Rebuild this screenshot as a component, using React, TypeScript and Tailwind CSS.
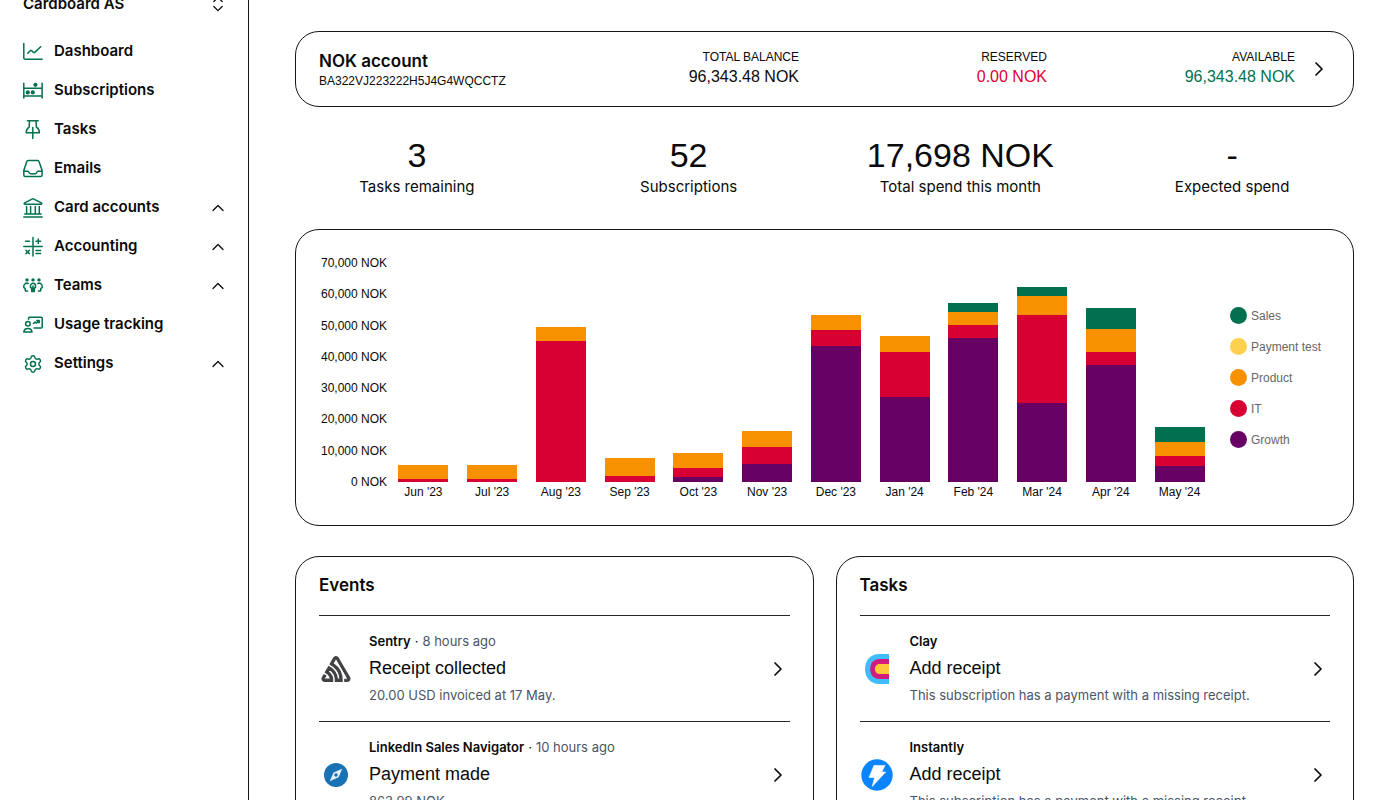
import type { ReactNode } from "react";
import clsx from "clsx";
import { ChevronRight, ChevronsUpDown, ChevronUp, Settings } from "lucide-react";
import { SiSentry } from "react-icons/si";

type Team = "Sales" | "Payment test" | "Product" | "IT" | "Growth";

interface NavItem {
  label: string;
  icon: ReactNode;
  expandable?: boolean;
}

interface MonthSpend {
  month: string;
  spend: Partial<Record<Team, number>>;
}

interface FeedItem {
  name: string;
  time?: string;
  title: string;
  description: string;
  logo: ReactNode;
}

function NavIcon({ children }: { children: ReactNode }) {
  return (
    <svg
      viewBox="0 0 20 20"
      className="size-5 shrink-0 overflow-visible"
      fill="none"
      stroke="currentColor"
      strokeWidth="1.5"
      strokeLinecap="round"
      strokeLinejoin="round"
      aria-hidden="true"
    >
      {children}
    </svg>
  );
}

const navItems: NavItem[] = [
  {
    label: "Dashboard",
    icon: (
      <NavIcon>
        <path d="M.8 1.5v14.2a1.600 1.600 0 0 0 1.600 1.600h16.800" />
        <path d="m4.800 11.300 2.700-2.900a.7.7 0 0 1 1 0l2 2.200a.7.7 0 0 0 1 0l6.200-5.900" />
      </NavIcon>
    ),
  },
  {
    label: "Subscriptions",
    icon: (
      <NavIcon>
        <path d="M.8 2.300v14.600M19.100 2.300v14.600M.8 7.300h18.300M.8 15.100h18.300" />
        <g fill="currentColor" stroke="none">
          <circle cx="12.400" cy="3.800" r="2.100" />
          <circle cx="4.800" cy="11.400" r="2.100" />
          <circle cx="9.800" cy="11.400" r="2.100" />
        </g>
      </NavIcon>
    ),
  },
  {
    label: "Tasks",
    icon: (
      <NavIcon>
        <path d="M4.400.8h10.800M6.500.8 6.200 7.200C4.300 8.200 3.200 10.200 3.200 12.800h13.200c0-2.600-1.100-4.600-3-5.600L13.100.8M9.800 7.600v11" />
      </NavIcon>
    ),
  },
  {
    label: "Emails",
    icon: (
      <NavIcon>
        <path d="M5.200 1.500h9.400a1.500 1.500 0 0 1 1.500 1.200L19.100 11.500v4.500a1.500 1.500 0 0 1-1.500 1.500H2.300a1.500 1.500 0 0 1-1.500-1.500V11.500L3.700 2.700A1.500 1.500 0 0 1 5.200 1.500Z" />
        <path d="M.8 12.200h4.100c.8 0 .9.500 1 1 .2.900.8 1.500 1.700 1.500h4.700c.9 0 1.500-.6 1.700-1.500.1-.5.300-1 1-1h4.100" />
      </NavIcon>
    ),
  },
  {
    label: "Card accounts",
    expandable: true,
    icon: (
      <NavIcon>
        <path d="M2 6.200h16c.9 0 1.100-.9.400-1.300L10.400.9a1 1 0 0 0-.9 0L1.600 4.900c-.7.400-.5 1.300.4 1.300ZM3.600 8.500v7M7.600 8.500v7M12.300 8.500v7M16.300 8.500v7M1.800 16h16.300M.8 18.900h18.400" />
      </NavIcon>
    ),
  },
  {
    label: "Accounting",
    expandable: true,
    icon: (
      <NavIcon>
        <path d="M.8 9.600h18.400M10 .6v18.400M2.500 4.200h4M13 4.200h4.600M15.300 1.900v4.600M3 13.300l3.300 3.300M6.300 13.300 3 16.600M13 13.500h4.600M13 16.500h4.600" />
      </NavIcon>
    ),
  },
  {
    label: "Teams",
    expandable: true,
    icon: (
      <NavIcon>
        <g fill="currentColor" stroke="none">
          <circle cx="4" cy="3.900" r="1.700" />
          <circle cx="10" cy="3.900" r="1.700" />
          <circle cx="16" cy="3.900" r="1.700" />
        </g>
        <path d="M10 7.200a2.500 2.500 0 0 0-2.500 2.500v1.700l1 .6.300 3.600h2.400l.3-3.600 1-.6V9.700A2.500 2.500 0 0 0 10 7.200ZM10 10v4" />
        <path d="M5.200 7.500a3 3 0 0 0-4.400 2.700v1.400l1.300.8.300 2.600h2.200M14.800 7.500a3 3 0 0 1 4.400 2.700v1.400l-1.300.8-.3 2.600h-2.200" />
      </NavIcon>
    ),
  },
  {
    label: "Usage tracking",
    icon: (
      <NavIcon>
        <path d="M5.500 4.200V3.400a1.100 1.100 0 0 1 1.100-1.100h11.500a1.100 1.100 0 0 1 1.100 1.100v8.400a1.100 1.100 0 0 1-1.100 1.100H11" />
        <circle cx="4.900" cy="8.800" r="2.300" />
        <path d="M.8 17.100c.2-2.300 1.900-3.600 4.100-3.600s3.900 1.300 4.100 3.600ZM10.500 8.300l1.600-1.200 1.400 1 2.500-2.200M13.800 5.600h2.400v2.200" />
      </NavIcon>
    ),
  },
  {
    label: "Settings",
    expandable: true,
    icon: <Settings className="size-5 shrink-0" strokeWidth={1.75} />,
  },
];

const balances = [
  { label: "TOTAL BALANCE", value: "96,343.48 NOK", color: "text-neutral-950" },
  { label: "RESERVED", value: "0.00 NOK", color: "text-[#dc0036]" },
  { label: "AVAILABLE", value: "96,343.48 NOK", color: "text-[#00714e]" },
];

const stats = [
  { label: "Tasks remaining", value: "3" },
  { label: "Subscriptions", value: "52" },
  { label: "Total spend this month", value: "17,698 NOK" },
  { label: "Expected spend", value: "-" },
];

const AXIS_MAX = 70000;
const axisTicks = ["70,000", "60,000", "50,000", "40,000", "30,000", "20,000", "10,000", "0"];

// Top of the stack first
const teams: Team[] = ["Sales", "Payment test", "Product", "IT", "Growth"];

const teamColors: Record<Team, string> = {
  Sales: "bg-[#00704e]",
  "Payment test": "bg-[#fdd04e]",
  Product: "bg-[#f79100]",
  IT: "bg-[#d80033]",
  Growth: "bg-[#670063]",
};

const spendByMonth: MonthSpend[] = [
  { month: "Jun '23", spend: { Product: 4470, IT: 1070 } },
  { month: "Jul '23", spend: { Product: 4580, IT: 960 } },
  { month: "Aug '23", spend: { Product: 4600, IT: 45000 } },
  { month: "Sep '23", spend: { Product: 5900, IT: 1900 } },
  { month: "Oct '23", spend: { Product: 5000, IT: 2900, Growth: 1500 } },
  { month: "Nov '23", spend: { Product: 5300, IT: 5200, Growth: 5900 } },
  { month: "Dec '23", spend: { Product: 4800, IT: 5100, Growth: 43600 } },
  { month: "Jan '24", spend: { Product: 5400, IT: 14200, Growth: 27200 } },
  { month: "Feb '24", spend: { Sales: 2800, Product: 4400, IT: 4000, Growth: 46100 } },
  { month: "Mar '24", spend: { Sales: 2700, Product: 6200, IT: 28100, Growth: 25200 } },
  { month: "Apr '24", spend: { Sales: 6600, Product: 7300, IT: 4200, Growth: 37500 } },
  { month: "May '24", spend: { Sales: 5050, Product: 4200, IT: 3348, Growth: 5100 } },
];

function SalesNavigatorLogo() {
  return (
    <svg viewBox="0 0 24 24" className="size-6" aria-hidden="true">
      <circle cx="12" cy="12" r="12" fill="#1872b4" />
      <path d="M18.200 5.800 14.600 14.200 5.800 18.200 9.600 9.600Z" fill="#fff" opacity=".9" />
      <circle cx="12" cy="12" r="1.800" fill="#1872b4" />
    </svg>
  );
}

function ClayLogo() {
  return (
    <svg viewBox="0 0 24 30" className="h-[30px] w-6" aria-hidden="true">
      <path d="M24 0H14C5.500 0 0 6.500 0 15s5.500 15 14 15h10Z" fill="#41bcfb" />
      <path d="M24 5H14.500C8.800 5 5.200 9.300 5.200 15s3.600 10 9.300 10H24Z" fill="#d21b7c" />
      <path d="M24 10H14.500c-2.800 0-4.600 2.200-4.600 5s1.800 5 4.600 5H24Z" fill="#ffc83c" />
    </svg>
  );
}

function InstantlyLogo() {
  return (
    <svg viewBox="0 0 32 32" className="size-8" aria-hidden="true">
      <circle cx="16" cy="16" r="15.700" fill="#0a84ff" />
      <path
        d="M13 6.500h11L20.700 13h4L11.200 27.500l2.400-9H8Z"
        fill="#fff"
        stroke="#fff"
        strokeWidth=".6"
        strokeLinejoin="round"
      />
    </svg>
  );
}

const events: FeedItem[] = [
  {
    name: "Sentry",
    time: "8 hours ago",
    title: "Receipt collected",
    description: "20.00 USD invoiced at 17 May.",
    logo: (
      <SiSentry
        className="size-7 overflow-visible stroke-[#434045] text-[#434045]"
        strokeWidth={1}
        strokeLinejoin="round"
      />
    ),
  },
  {
    name: "LinkedIn Sales Navigator",
    time: "10 hours ago",
    title: "Payment made",
    description: "863.99 NOK",
    logo: <SalesNavigatorLogo />,
  },
];

const tasks: FeedItem[] = [
  {
    name: "Clay",
    title: "Add receipt",
    description: "This subscription has a payment with a missing receipt.",
    logo: <ClayLogo />,
  },
  {
    name: "Instantly",
    title: "Add receipt",
    description: "This subscription has a payment with a missing receipt.",
    logo: <InstantlyLogo />,
  },
];

function Sidebar() {
  return (
    <aside className="w-[249px] shrink-0 border-r border-neutral-900 pr-5 pl-[23px] font-[Inter,sans-serif] text-[15px] font-semibold">
      <button type="button" className="-mt-2 flex h-6 w-full items-center justify-between">
        Cardboard AS
        <ChevronsUpDown className="size-5" strokeWidth={1.5} />
      </button>
      <nav className="mt-4">
        {navItems.map((item) => (
          <a key={item.label} href="#" className="flex h-[39px] items-center gap-[11px]">
            <span className="text-[#00714e]">{item.icon}</span>
            <span className="flex-1">{item.label}</span>
            {item.expandable && <ChevronUp className="size-5" strokeWidth={1.5} />}
          </a>
        ))}
      </nav>
    </aside>
  );
}

function AccountCard() {
  return (
    <a
      href="#"
      className="flex h-[76px] items-center gap-3 rounded-3xl border border-neutral-900 pr-[22px] pl-[23px]"
    >
      <div className="grid flex-1 grid-cols-4 gap-4">
        <div>
          <h2 className="font-[Inter,sans-serif] text-[17px] leading-6 font-semibold">NOK account</h2>
          <p className="text-xs">BA322VJ223222H5J4G4WQCCTZ</p>
        </div>
        {balances.map((balance) => (
          <div key={balance.label} className="text-right">
            <p className="text-xs">{balance.label}</p>
            <p className={clsx("text-base", balance.color)}>{balance.value}</p>
          </div>
        ))}
      </div>
      <ChevronRight className="size-6" strokeWidth={1.75} />
    </a>
  );
}

function SpendChart() {
  return (
    <section className="flex rounded-3xl border border-neutral-900 px-[25px] pt-[25px] pb-[25px] text-xs">
      <div className="flex h-[235px] w-[66px] flex-col justify-between text-right whitespace-nowrap">
        {axisTicks.map((tick) => (
          <span key={tick}>{tick} NOK</span>
        ))}
      </div>
      <div className="ml-0.5 flex flex-1 pt-2">
        {spendByMonth.map(({ month, spend }) => (
          <div key={month} className="flex flex-1 flex-col items-center">
            <div className="flex h-[219px] w-[50px] flex-col justify-end">
              {teams.map((team) => (
                <div
                  key={team}
                  className={teamColors[team]}
                  style={{ height: `${((spend[team] ?? 0) / AXIS_MAX) * 100}%` }}
                />
              ))}
            </div>
            <span className="mt-0.5">{month}</span>
          </div>
        ))}
      </div>
      <ul className="mt-[52px] ml-4 w-[98px] space-y-[14px] text-[#666]">
        {teams.map((team) => (
          <li key={team} className="flex h-[17px] items-center gap-1 whitespace-nowrap">
            <span className={clsx("size-[17px] rounded-full", teamColors[team])} />
            {team}
          </li>
        ))}
      </ul>
    </section>
  );
}

function FeedCard({ heading, items }: { heading: string; items: FeedItem[] }) {
  return (
    <section className="rounded-3xl border border-neutral-900 px-[23px] pb-6">
      <h2 className="flex h-[58px] items-center font-[Inter,sans-serif] text-[17px] font-semibold">
        {heading}
      </h2>
      <ul>
        {items.map((item) => (
          <li key={item.name} className="border-t border-neutral-800">
            <a href="#" className="flex items-center gap-4 py-3 leading-[27px]">
              <span className="flex w-[34px] shrink-0 justify-center">{item.logo}</span>
              <div className="flex-1">
                <p className="flex gap-1 font-[Inter,sans-serif] text-[13px] leading-[27px] text-gray-600">
                  <span className="font-semibold text-neutral-950">{item.name}</span>
                  {item.time && (
                    <>
                      <span className="text-neutral-950">·</span>
                      <span>{item.time}</span>
                    </>
                  )}
                </p>
                <h3 className="text-lg leading-[27px]">{item.title}</h3>
                <p className="font-[Inter,sans-serif] text-[13px] leading-[27px] text-gray-600">
                  {item.description}
                </p>
              </div>
              <ChevronRight className="size-6" strokeWidth={1.75} />
            </a>
          </li>
        ))}
      </ul>
    </section>
  );
}

export default function App() {
  return (
    <div className="flex h-screen overflow-hidden bg-white font-['Liberation_Sans',Arial,sans-serif] text-neutral-950">
      <Sidebar />
      <main className="min-w-0 flex-1 px-[46px] pt-[31px]">
        <AccountCard />

        {/* Key figures */}
        <dl className="mt-7 mb-[30px] grid grid-cols-4 gap-7 text-center">
          {stats.map((stat) => (
            <div key={stat.label} className="flex flex-col-reverse">
              <dt className="font-[Inter,sans-serif] text-[15px] leading-6">{stat.label}</dt>
              <dd className="text-[34px] leading-10">{stat.value}</dd>
            </div>
          ))}
        </dl>

        <SpendChart />

        <div className="mt-[30px] grid grid-cols-2 gap-[22px]">
          <FeedCard heading="Events" items={events} />
          <FeedCard heading="Tasks" items={tasks} />
        </div>
      </main>
    </div>
  );
}
